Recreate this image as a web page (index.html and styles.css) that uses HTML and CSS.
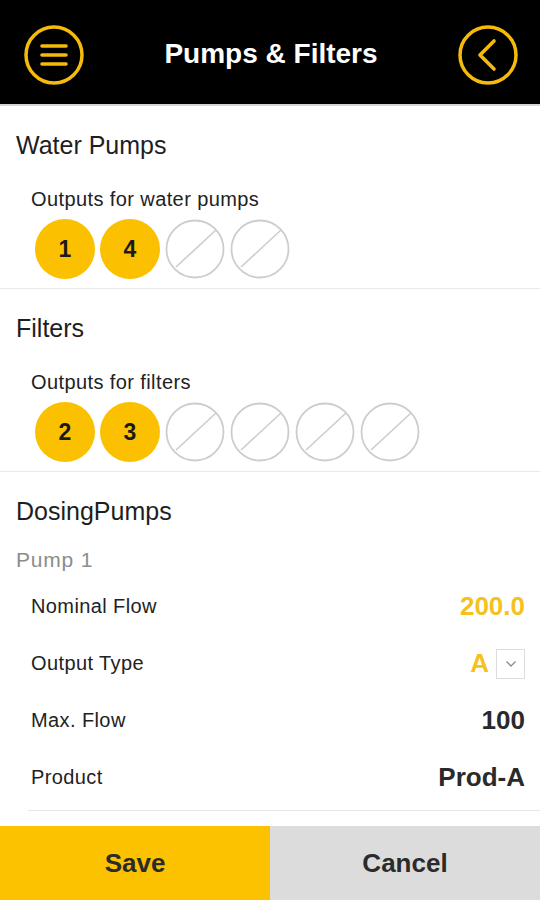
FILE: index.html
```html
<!DOCTYPE html>
<html>
<head>
    <title>Pumps &amp; Filters</title>
    <link rel="stylesheet" href="styles.css">
</head>
<body>
    <div class="app">
        <header class="topbar">
            <svg class="round-icon" width="62" height="62" viewBox="0 0 62 62">
                <circle cx="31" cy="31" r="28" fill="none" stroke="#f5bb0a" stroke-width="3.5"/>
                <path d="M19 22h24M19 31h24M19 40h24" stroke="#f5bb0a" stroke-width="3.6" stroke-linecap="round"/>
            </svg>
            <h1>Pumps &amp; Filters</h1>
            <svg class="round-icon" width="62" height="62" viewBox="0 0 62 62">
                <circle cx="31" cy="31" r="28" fill="none" stroke="#f5bb0a" stroke-width="3.5"/>
                <path d="M37 17L23 31l14 14" fill="none" stroke="#f5bb0a" stroke-width="3.6" stroke-linecap="round" stroke-linejoin="round"/>
            </svg>
        </header>

        <main class="content">
            <section class="section">
                <h2 class="section-title">Water Pumps</h2>
                <div class="outputs-label">Outputs for water pumps</div>
                <div class="outputs">
                    <span class="output on">1</span>
                    <span class="output on">4</span>
                    <span class="output off"><svg width="60" height="60" viewBox="0 0 60 60"><circle cx="30" cy="30" r="28.5" fill="#fff" stroke="#cdcdcd" stroke-width="1.8"/><path d="M11 48L51 11" stroke="#cdcdcd" stroke-width="1.6"/></svg></span>
                    <span class="output off"><svg width="60" height="60" viewBox="0 0 60 60"><circle cx="30" cy="30" r="28.5" fill="#fff" stroke="#cdcdcd" stroke-width="1.8"/><path d="M11 48L51 11" stroke="#cdcdcd" stroke-width="1.6"/></svg></span>
                </div>
            </section>

            <section class="section">
                <h2 class="section-title">Filters</h2>
                <div class="outputs-label">Outputs for filters</div>
                <div class="outputs">
                    <span class="output on">2</span>
                    <span class="output on">3</span>
                    <span class="output off"><svg width="60" height="60" viewBox="0 0 60 60"><circle cx="30" cy="30" r="28.5" fill="#fff" stroke="#cdcdcd" stroke-width="1.8"/><path d="M11 48L51 11" stroke="#cdcdcd" stroke-width="1.6"/></svg></span>
                    <span class="output off"><svg width="60" height="60" viewBox="0 0 60 60"><circle cx="30" cy="30" r="28.5" fill="#fff" stroke="#cdcdcd" stroke-width="1.8"/><path d="M11 48L51 11" stroke="#cdcdcd" stroke-width="1.6"/></svg></span>
                    <span class="output off"><svg width="60" height="60" viewBox="0 0 60 60"><circle cx="30" cy="30" r="28.5" fill="#fff" stroke="#cdcdcd" stroke-width="1.8"/><path d="M11 48L51 11" stroke="#cdcdcd" stroke-width="1.6"/></svg></span>
                    <span class="output off"><svg width="60" height="60" viewBox="0 0 60 60"><circle cx="30" cy="30" r="28.5" fill="#fff" stroke="#cdcdcd" stroke-width="1.8"/><path d="M11 48L51 11" stroke="#cdcdcd" stroke-width="1.6"/></svg></span>
                </div>
            </section>

            <section class="dosing">
                <h2 class="section-title">DosingPumps</h2>
                <div class="pump">
                    <div class="pump-name">Pump 1</div>
                    <div class="pump-rows">
                        <div class="row">
                            <span class="row-label">Nominal Flow</span>
                            <span class="row-value yellow">200.0</span>
                        </div>
                        <div class="row">
                            <span class="row-label">Output Type</span>
                            <span class="row-value yellow">A
                                <span class="select-box"><svg width="12" height="8" viewBox="0 0 12 8"><path d="M1.5 1.5L6 6l4.5-4.5" fill="none" stroke="#8a8a8a" stroke-width="1.3"/></svg></span>
                            </span>
                        </div>
                        <div class="row">
                            <span class="row-label">Max. Flow</span>
                            <span class="row-value">100</span>
                        </div>
                        <div class="row">
                            <span class="row-label">Product</span>
                            <span class="row-value">Prod-A</span>
                        </div>
                    </div>
                </div>
            </section>
        </main>

        <footer class="actions">
            <button class="btn save">Save</button>
            <button class="btn cancel">Cancel</button>
        </footer>
    </div>
</body>
</html>
```

FILE: styles.css
```css
body {
    margin: 0;
    font-family: "Liberation Sans", Arial, sans-serif;
    background-color: #ffffff;
    color: #1e1e1e;
}
.app {
    height: 100vh;
    display: flex;
    flex-direction: column;
}
.topbar {
    height: 98px;
    padding: 6px 21px 0 23px;
    background-color: #000000;
    border-bottom: 2px solid #d4d4d4;
    display: flex;
    align-items: center;
    justify-content: space-between;
    flex-shrink: 0;
}
.topbar h1 {
    margin: 0 0 2px 0;
    color: #ffffff;
    font-size: 28px;
    font-weight: bold;
}
.round-icon {
    display: block;
}
.content {
    flex: 1;
    overflow: hidden;
}
.section {
    padding: 24px 0 9px 0;
    border-bottom: 1px solid #e9e9e9;
}
.section-title {
    margin: 0 16px;
    font-size: 25px;
    line-height: 30px;
    font-weight: normal;
    color: #1e1e1e;
}
.outputs-label {
    margin: 27px 0 0 31px;
    font-size: 20px;
    line-height: 24px;
    letter-spacing: 0.4px;
    color: #222;
}
.outputs {
    margin: 8px 0 0 35px;
    display: flex;
    gap: 5px;
}
.output {
    width: 60px;
    height: 60px;
    border-radius: 50%;
    display: flex;
    align-items: center;
    justify-content: center;
}
.output.on {
    background-color: #fbc100;
    font-size: 23px;
    font-weight: bold;
    color: #1a1a1a;
}
.output svg {
    display: block;
}
.dosing {
    padding-top: 24px;
}
.pump-name {
    margin: 21px 16px 0 16px;
    font-size: 21px;
    line-height: 26px;
    letter-spacing: 0.8px;
    color: #8c8c8c;
}
.pump-rows {
    margin: 5px 0 0 28px;
    padding-bottom: 4px;
    border-bottom: 1px solid #e6e6e6;
}
.row {
    height: 57px;
    padding: 0 15px 0 3px;
    display: flex;
    align-items: center;
    justify-content: space-between;
}
.row-label {
    font-size: 20px;
    letter-spacing: 0.4px;
    color: #222;
}
.row-value {
    font-size: 26px;
    font-weight: bold;
    color: #2a2a2a;
    display: flex;
    align-items: center;
}
.row-value.yellow {
    color: #f5c11c;
}
.select-box {
    width: 27px;
    height: 28px;
    margin-left: 7px;
    border: 1px solid #dddddd;
    display: flex;
    align-items: center;
    justify-content: center;
}
.actions {
    height: 74px;
    display: flex;
    flex-shrink: 0;
}
.btn {
    flex: 1;
    border: none;
    margin: 0;
    font-family: "Liberation Sans", Arial, sans-serif;
    font-size: 26px;
    font-weight: bold;
    color: #2b2b2b;
    cursor: pointer;
}
.save {
    background-color: #fcc200;
}
.cancel {
    background-color: #dcdcdc;
}
```
